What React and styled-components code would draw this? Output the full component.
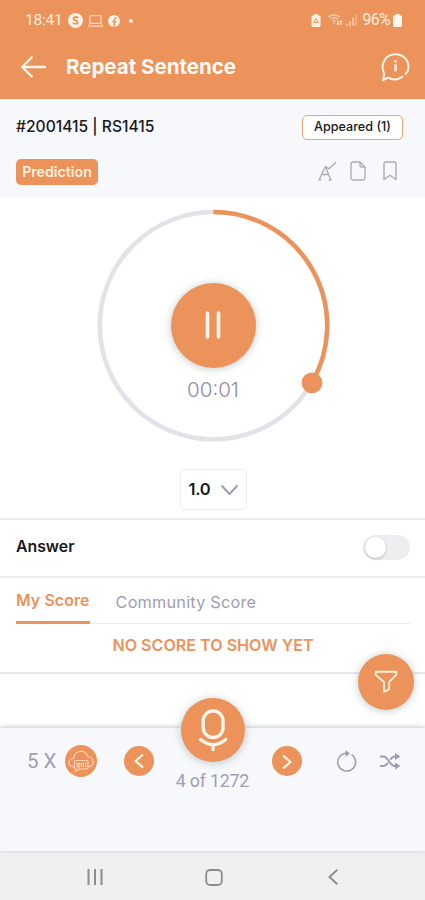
import React from "react";
import styled, { createGlobalStyle } from "styled-components";

const ORANGE = "#ec925b";
const MUTED = "#a09eb2";

const Global = createGlobalStyle`
  * { box-sizing: border-box; }
  body { margin: 0; background: #fff; font-family: Inter, "Open Sans", sans-serif; }
  svg { display: block; flex: none; overflow: visible; }
`;

const Screen = styled.div`
  width: 425px;
  height: 900px;
  display: flex;
  flex-direction: column;
  overflow: hidden;
  background: #fff;
`;

const Label = styled.span`
  font-family: ${(p) => p.$font || "Inter, sans-serif"};
  font-size: ${(p) => p.$size}px;
  font-weight: ${(p) => p.$weight || 400};
  letter-spacing: ${(p) => p.$track || 0}px;
  color: ${(p) => p.$color || "#17171c"};
  line-height: 1.2;
  white-space: nowrap;
`;

const Header = styled.header`
  height: 99px;
  flex: none;
  background: ${ORANGE};
`;

const StatusBar = styled.div`
  height: 40px;
  padding: 1px 23px 0 25px;
  display: flex;
  align-items: center;
  justify-content: space-between;
`;

const StatusGroup = styled.div`
  display: flex;
  align-items: center;
  gap: ${(p) => p.$gap}px;
`;

const TitleBar = styled.div`
  height: 54px;
  padding: 0 15px 0 21px;
  display: flex;
  align-items: center;
`;

const Title = styled.h1`
  margin: 0 auto 0 20px;
  font-size: 20.5px;
  line-height: 26px;
  font-weight: 700;
  letter-spacing: 0;
  color: #fffaf3;
`;

const Meta = styled.section`
  height: 99px;
  flex: none;
  padding: 16px 22px 0 16px;
  background: #f7f8fc;
`;

const MetaRow = styled.div`
  display: flex;
  align-items: center;
  justify-content: space-between;
  height: 24px;
  margin-bottom: ${(p) => p.$below || 0}px;
`;

const Appeared = styled.div`
  width: 101px;
  height: 25px;
  border: 1px solid #eba57a;
  border-radius: 5px;
  background: #fff;
  display: flex;
  align-items: center;
  justify-content: center;
`;

const Tag = styled.div`
  width: 82px;
  height: 26px;
  border-radius: 5px;
  background: ${ORANGE};
  display: flex;
  align-items: center;
  justify-content: center;
`;

const MetaIcons = styled.div`
  display: flex;
  align-items: center;
  gap: 13px;
  padding: 0 6px 2px 0;
`;

const Player = styled.section`
  height: 322px;
  flex: none;
  padding-top: 11px;
  display: flex;
  flex-direction: column;
  align-items: center;
  border-bottom: 2px solid #e9eaf0;
`;

const Dial = styled.div`
  width: 234px;
  height: 234px;
  display: grid;
  place-items: center;
`;

const DialRing = styled.svg`
  grid-area: 1 / 1;
`;

const DialBody = styled.div`
  grid-area: 1 / 1;
  display: flex;
  flex-direction: column;
  align-items: center;
  gap: 10px;
  padding: 33px 0 0 1px;
`;

const Round = styled.button`
  width: ${(p) => p.$d}px;
  height: ${(p) => p.$d}px;
  flex: none;
  padding: 0;
  border: 0;
  border-radius: 50%;
  background: ${ORANGE};
  display: flex;
  align-items: center;
  justify-content: center;
  box-shadow: ${(p) => (p.$raised ? "0 1px 9px rgba(70, 90, 80, 0.32)" : "none")};
`;

const Speed = styled.button`
  width: 67px;
  height: 41px;
  margin: 26px 0 0 1px;
  padding: 0 8px 0 8px;
  border: 1.5px solid #eeeef1;
  border-radius: 5px;
  background: #fff;
  display: flex;
  align-items: center;
  justify-content: space-between;
`;

const AnswerRow = styled.section`
  height: 58px;
  flex: none;
  padding: 0 15px 1px 16px;
  display: flex;
  align-items: center;
  justify-content: space-between;
  border-bottom: 2px solid #eaeaf4;
`;

const Switch = styled.div`
  width: 47px;
  height: 25px;
  border-radius: 13px;
  background: #eceeef;
  padding: 2px;
`;

const Knob = styled.div`
  width: 21px;
  height: 21px;
  border-radius: 50%;
  background: #fff;
  box-shadow: 0 1px 3px rgba(0, 0, 0, 0.24);
`;

const Scores = styled.section`
  height: 96px;
  flex: none;
  border-bottom: 2px solid #e6e7f0;
`;

const Tabs = styled.nav`
  height: 46px;
  margin: 0 15px 0 16px;
  display: flex;
  align-items: stretch;
  gap: 26px;
  border-bottom: 1px solid #ececf0;
`;

const Tab = styled.div`
  height: 46px;
  padding-top: ${(p) => (p.$active ? 12 : 14)}px;
  border-bottom: ${(p) => (p.$active ? `3px solid ${ORANGE}` : "0")};
  line-height: 20px;
`;

const Empty = styled.div`
  padding: 11px 0 0 1px;
  text-align: center;
`;

const Space = styled.div`
  flex: 1;
`;

const Footer = styled.footer`
  position: relative;
  height: 123px;
  flex: none;
  background: #f7f8fc;
  box-shadow: 0 -1px 5px rgba(70, 80, 80, 0.3);
`;

const Controls = styled.div`
  height: 66px;
  padding: 0 24px 0 27px;
  display: flex;
  align-items: center;
`;

const Control = styled.div`
  display: flex;
  margin-left: ${(p) => p.$left}px;
`;

const Counter = styled.div`
  margin-top: -24px;
  text-align: center;
`;

const Floating = styled.div`
  position: absolute;
  left: ${(p) => p.$x}px;
  top: ${(p) => p.$y}px;
`;

const SystemNav = styled.nav`
  height: 49px;
  flex: none;
  background: #f0f0f0;
  padding: 3px 86px 0 87px;
  display: flex;
  align-items: center;
`;

const ROBOTO = "Roboto, sans-serif";
const CREAM = "#fff3e6";

const MoneyIcon = () => (
  <svg width="15" height="15" viewBox="0 0 15 15">
    <circle cx="7.5" cy="7.5" r="7.5" fill={CREAM} />
    <path d="M10 5C8.9 3.5 5.3 3.7 5.3 5.6c0 2 4.5 1.5 4.5 3.7 0 1.9-3.6 2.1-4.9.5" fill="none" stroke={ORANGE} strokeWidth="1.8" />
  </svg>
);

const LaptopIcon = () => (
  <svg width="15" height="12" viewBox="0 0 15 12" fill="none" stroke="#fad8b8" strokeWidth="1.2">
    <rect x="2" y=".7" width="11" height="7.6" rx=".8" />
    <path d="M2 8.5.7 11.2h13.6L13 8.5" />
  </svg>
);

const FacebookIcon = () => (
  <svg width="12" height="12" viewBox="0 0 12 12">
    <circle cx="6" cy="6" r="6" fill={CREAM} />
    <path d="M6.2 12V5c0-1.5.8-2.1 2.3-1.9M4.4 6.7h3.9" fill="none" stroke={ORANGE} strokeWidth="1.4" />
  </svg>
);

const DotIcon = () => (
  <svg width="4" height="4" viewBox="0 0 4 4">
    <circle cx="2" cy="2" r="2" fill={CREAM} />
  </svg>
);

const SaverIcon = () => (
  <svg width="10" height="13" viewBox="0 0 10 13">
    <path d="M3 1.5V0h4v1.5h1.5Q9.5 1.5 9.5 3v8.5Q9.5 13 8 13H2Q.5 13 .5 11.500V3Q.5 1.500 2 1.500z" fill={CREAM} />
    <path d="m5 4.300 2.200 4.200H2.800z" fill="none" stroke={ORANGE} strokeWidth="1" />
  </svg>
);

const WifiIcon = () => (
  <svg width="15" height="12" viewBox="0 0 15 12" fill="none" stroke="#fbd9bb" strokeWidth="1.3">
    <path d="M.5 3q5.500-4.200 11 0M2.500 5q3.500-2.700 7 0M4.300 7q1.700-1.300 3.400 0M6 8.200v1.600M10 6.500v4M8.800 9.300l1.200 1.400 1.200-1.400M13 11V7M11.900 8.200 13 7l1.200 1.200" />
  </svg>
);

const SignalIcon = () => (
  <svg width="11" height="12" viewBox="0 0 11 12" fill="none" stroke="#fbd9bb" strokeWidth="1.3">
    <path d="M1 12V9.500M4 12V7M7 12V3.500" />
    <path d="M10 12V0" opacity=".55" />
  </svg>
);

const BatteryIcon = () => (
  <svg width="9" height="13" viewBox="0 0 9 13">
    <path d="M2.500 1.500V0h4v1.500H8q1 0 1 1V12q0 1-1 1H1q-1 0-1-1V2.500q0-1 1-1z" fill="#fff8ee" />
  </svg>
);

const BackArrow = () => (
  <svg width="25" height="21" viewBox="0 0 25 21" fill="none" stroke="#fff6ea" strokeWidth="2.400" strokeLinecap="round" strokeLinejoin="round">
    <path d="M24 10H1.200M10.700.5 1.200 10l9.500 9.500" />
  </svg>
);

const InfoBubble = () => (
  <svg width="29" height="29" viewBox="0 0 29 29" fill="none" stroke="#fff6ea" strokeWidth="1.900" strokeLinecap="round" strokeLinejoin="round">
    <path d="M21.500 23.800A13 12.400 0 0 1 7 24.600L2 27.200l1.300-6.200C-1.800 10.300 5.500 1.300 14.500 1.300c8 0 13 6 13 12.500 0 3-1 5.400-3 7.200" />
    <path d="M14.600 11.300v7" strokeWidth="2.400" strokeLinecap="butt" />
    <circle cx="14.600" cy="8.300" r="1.300" fill="#fff6ea" stroke="none" />
  </svg>
);

const SpellIcon = () => (
  <svg width="19" height="20" viewBox="0 0 19 20" fill="none" stroke="#aaaab4" strokeWidth="1.300" strokeLinejoin="round">
    <path d="M1 19 7.500 5.500 12.700 19M.7 19h2.600M10.800 19h2.800M4.300 13.500h6.400M7.500 5.500l3.500 2.300 7-6.600" />
  </svg>
);

const PageIcon = () => (
  <svg width="16" height="20" viewBox="0 0 16 20" fill="none" stroke="#aaaab4" strokeWidth="1.300" strokeLinejoin="round">
    <path d="M3 1h7l5 5v10.500q0 2.500-2.500 2.500h-9Q1 19 1 16.500V3q0-2 2-2zM10 1v3.500Q10 6 11.500 6H15" />
  </svg>
);

const BookmarkIcon = () => (
  <svg width="14" height="20" viewBox="0 0 14 20" fill="none" stroke="#aaaab4" strokeWidth="1.400" strokeLinejoin="round">
    <path d="M1 18.500V3q0-2 2-2h8q2 0 2 2v15.500l-6-4.300z" />
  </svg>
);

const FilterIcon = () => (
  <svg width="24" height="24" viewBox="0 0 24 24" fill="none" stroke="#fff1dc" strokeWidth="1.900" strokeLinejoin="round">
    <path d="M1.700 1.700h20.500v3.200l-7 7v7.300L10 21.800V12L1.700 4.900z" />
  </svg>
);

const MicIcon = () => (
  <svg width="28" height="43" viewBox="0 0 28 43" fill="none" stroke="#fff5e9" strokeWidth="3.400" strokeLinecap="round">
    <rect x="4.200" y="2" width="19.800" height="26.500" rx="9.700" />
    <path d="M1.600 30.500Q14 41 26.600 30.500M14.100 36v4.500" />
  </svg>
);

const CloudIcon = () => (
  <svg width="26" height="23" viewBox="0 0 26 23" fill="none" stroke="#fbd9bd" strokeWidth="1.150" strokeLinecap="round" strokeLinejoin="round">
    <path d="M6 17C-1 17-.5 8.500 5.700 8.500 6-.5 18.500-1 19.700 6.800c7.200.2 7.300 10.200.3 10.200" />
    <path d="M8.500 10.500h10q1.500 0 1.500 1.500v5.500q0 1.500-1.500 1.500H11l-3.500 2.500.2-2.500Q6.500 18.500 6.500 17v-5q0-1.500 2-1.500z" />
    <path d="M9 13.200h2.200v1.700H9.200v1.900h2M13.300 16.500v-3.300h2v3.500M17.600 13v3.700" />
  </svg>
);

const Chevron = ({ dir }) => (
  <svg width="10" height="14" viewBox="0 0 10 14" fill="none" stroke="#fff5e9" strokeWidth="2.200" strokeLinecap="round" strokeLinejoin="round">
    <path d={dir === "left" ? "M8.300 1.200 1.500 7l6.800 5.800" : "M1.700 2.200 8.500 8l-6.800 5.800"} />
  </svg>
);

const RefreshIcon = () => (
  <svg width="20" height="22" viewBox="0 0 20 22">
    <path d="M14.500 4.600A8.900 8.900 0 1 1 9.500 3.200" fill="none" stroke={MUTED} strokeWidth="1.600" />
    <path d="M8.500 0 13 3.500 8.500 7z" fill={MUTED} />
  </svg>
);

const ShuffleIcon = () => (
  <svg width="21" height="17" viewBox="0 0 21 17">
    <path d="M0 3.500h3.500C8 3.500 10 13 14.500 13H17M0 13h3.500c2 0 3.200-1.500 4.500-3.500M10.500 6.700c1-1.800 2.300-3.200 4-3.200H17" fill="none" stroke={MUTED} strokeWidth="2" />
    <path d="m15 0 5.500 3.500L15 7zM15 9.500l5.500 3.500-5.500 3.500z" fill={MUTED} />
  </svg>
);

export default function App() {
  return (
    <>
      <Global />
      <Screen>
        <Header>
          <StatusBar>
            <StatusGroup $gap={5}>
              <Label $font={ROBOTO} $size={15.5} $track={-0.2} $color="#fff1e0">18:41</Label>
              <MoneyIcon />
              <LaptopIcon />
              <FacebookIcon />
              <Control $left={4}><DotIcon /></Control>
            </StatusGroup>
            <StatusGroup $gap={3}>
              <SaverIcon />
              <Control $left={4}><WifiIcon /></Control>
              <SignalIcon />
              <Control $left={2}>
                <Label $font={ROBOTO} $size={15.8} $track={-0.6} $color="#fff1e0">96%</Label>
              </Control>
              <BatteryIcon />
            </StatusGroup>
          </StatusBar>
          <TitleBar>
            <BackArrow />
            <Title>Repeat Sentence</Title>
            <InfoBubble />
          </TitleBar>
        </Header>

        <Meta>
          <MetaRow $below={21}>
            <Label $size={15.6} $weight={500}>#2001415 | RS1415</Label>
            <Appeared>
              <Label $size={12.6} $weight={500}>Appeared (1)</Label>
            </Appeared>
          </MetaRow>
          <MetaRow>
            <Tag>
              <Label $size={14.2} $weight={600} $color="#fff1df">Prediction</Label>
            </Tag>
            <MetaIcons>
              <SpellIcon />
              <PageIcon />
              <Control $left={4}><BookmarkIcon /></Control>
            </MetaIcons>
          </MetaRow>
        </Meta>

        <Player>
          <Dial>
            <DialRing width="234" height="234" viewBox="0 0 234 234" fill="none">
              <circle cx="117.500" cy="116.700" r="113.700" stroke="#e2e2e8" strokeWidth="4.500" />
              <path d="M117.500 3a113.700 113.700 0 0 1 98.500 170.500" stroke={ORANGE} strokeWidth="4.500" />
              <circle cx="216" cy="173.800" r="10.400" fill={ORANGE} />
            </DialRing>
            <DialBody>
              <Round $d={85} $raised aria-label="Pause">
                <svg width="16" height="28" viewBox="0 0 16 28" stroke="#fff8ef" strokeWidth="3.600" strokeLinecap="round">
                  <path d="M2.500 2v24M13.500 2v24" />
                </svg>
              </Round>
              <Label $size={20.5} $weight={300} $color="#8e8ca4">00:01</Label>
            </DialBody>
          </Dial>
          <Speed>
            <Label $size={16.5} $weight={600} $track={-0.3}>1.0</Label>
            <svg width="17" height="10" viewBox="0 0 17 10" fill="none" stroke={MUTED} strokeWidth="2" strokeLinecap="round" strokeLinejoin="round">
              <path d="m1 1 7.500 8L16 1" />
            </svg>
          </Speed>
        </Player>

        <AnswerRow>
          <Label $size={15.8} $weight={600}>Answer</Label>
          <Switch><Knob /></Switch>
        </AnswerRow>

        <Scores>
          <Tabs>
            <Tab $active><Label $size={15.8} $weight={600} $track={0.15} $color={ORANGE}>My Score</Label></Tab>
            <Tab><Label $size={16.3} $track={0.2} $color={MUTED}>Community Score</Label></Tab>
          </Tabs>
          <Empty>
            <Label $size={16.1} $weight={600} $color={ORANGE}>NO SCORE TO SHOW YET</Label>
          </Empty>
        </Scores>

        <Space />

        <Footer>
          <Controls>
            <Label $font={ROBOTO} $size={20.5} $color={MUTED}>5 X</Label>
            <Control $left={9}><Round $d={32}><CloudIcon /></Round></Control>
            <Control $left={27}><Round $d={30} aria-label="Previous"><Chevron dir="left" /></Round></Control>
            <Control $left={118}><Round $d={30} aria-label="Next"><Chevron dir="right" /></Round></Control>
            <Control $left={35}><RefreshIcon /></Control>
            <Control $left={23}><ShuffleIcon /></Control>
          </Controls>
          <Counter>
            <Label $font={ROBOTO} $size={17.8} $track={-0.2} $color={MUTED}>4 of 1272</Label>
          </Counter>
          <Floating $x={181} $y={-30}>
            <Round $d={64} $raised aria-label="Record"><MicIcon /></Round>
          </Floating>
          <Floating $x={357.5} $y={-74}>
            <Round $d={56} $raised aria-label="Filter"><FilterIcon /></Round>
          </Floating>
        </Footer>

        <SystemNav>
          <svg width="16" height="16" viewBox="0 0 16 16" stroke="#8c8c8c" strokeWidth="2">
            <path d="M1.500 0v16M8 0v16M14.500 0v16" />
          </svg>
          <Control $left={102}>
            <svg width="18" height="17" viewBox="0 0 18 17" fill="none" stroke="#8c8c8c" strokeWidth="1.800">
              <rect x="1.200" y="1" width="15.600" height="15" rx="4" />
            </svg>
          </Control>
          <Control $left={105}>
            <svg width="10" height="16" viewBox="0 0 10 16" fill="none" stroke="#8c8c8c" strokeWidth="1.900">
              <path d="M9.300.8 1.500 8l7.800 7.200" />
            </svg>
          </Control>
        </SystemNav>
      </Screen>
    </>
  );
}
